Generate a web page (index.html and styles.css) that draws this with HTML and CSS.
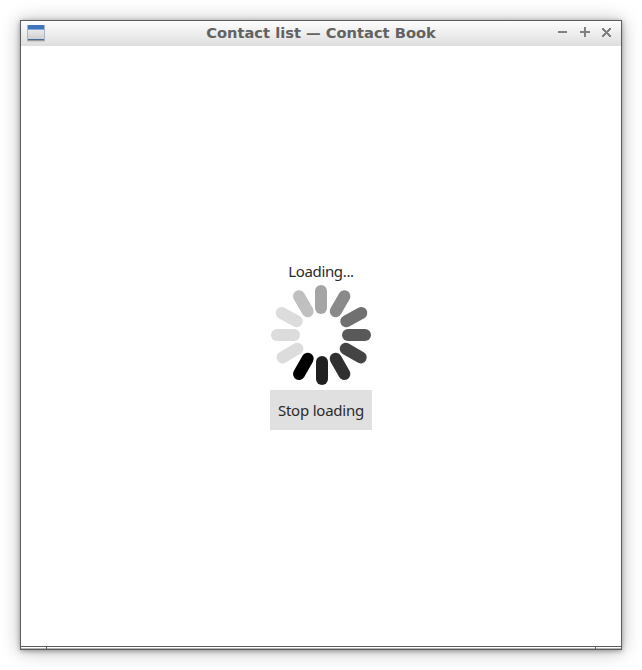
FILE: index.html
```html
<!DOCTYPE html>
<html lang="en">
<head>
<meta charset="utf-8">
<title>Contact list — Contact Book</title>
<link rel="stylesheet" href="styles.css">
</head>
<body>
<main class="window">
  <header class="titlebar">
    <svg class="app-icon" width="18" height="17" viewBox="0 0 18 17" shape-rendering="crispEdges">
      <defs><linearGradient id="pane" x1="0" y1="0" x2="0" y2="1"><stop offset="0" stop-color="#ececec"/><stop offset="1" stop-color="#cfcfcf"/></linearGradient></defs>
      <rect width="18" height="16" fill="#a9b5c5"/>
      <rect x="1" y="4" width="16" height="10" fill="url(#pane)"/>
      <rect x="1" width="16" height="4" fill="#3f74bd"/>
      <rect x="1" y="4" width="16" height="1" fill="#8aabd9"/>
      <rect x="1" y="14" width="16" height="1" fill="#496b9c"/>
      <rect x="1" y="15" width="16" height="1" fill="#9b9d9c"/>
      <rect y="16" width="18" height="1" fill="#cfcfcf"/>
    </svg>
    <h1 class="title">Contact list — Contact Book</h1>
    <svg class="controls" width="54" height="11" viewBox="0 0 54 11" shape-rendering="crispEdges" fill="#808080">
      <path d="M0 4h9v2H0z"/>
      <path d="M22 4h4V0h2v4h4v2h-4v4h-2V6h-4z"/>
      <path d="M44 1h2v1h-2zM51 1h2v1h-2zM44 2h3v1h-3zM50 2h3v1h-3zM45 3h3v1h-3zM49 3h3v1h-3zM46 4h5v1h-5zM47 5h3v1h-3zM46 6h5v1h-5zM45 7h3v1h-3zM49 7h3v1h-3zM44 8h3v1h-3zM50 8h3v1h-3zM44 9h2v1h-2zM51 9h2v1h-2z"/>
    </svg>
  </header>
  <section class="content">
    <p class="status">Loading...</p>
    <svg class="spinner" width="100" height="100" viewBox="0 0 100 100" fill="none" stroke-width="12" stroke-linecap="round">
      <path stroke="#a5a5a5" d="M50 6V23"/>
      <path stroke="#8a8a8a" d="M73.4 11.3 64.7 26.3"/>
      <path stroke="#707070" d="M90.3 28 75.3 36.3"/>
      <path stroke="#595959" d="M77 50H94"/>
      <path stroke="#444" d="M74.7 63.7 89.7 72.4"/>
      <path stroke="#303030" d="M64.7 73.7 73.4 89"/>
      <path stroke="#202020" d="M51 77V94"/>
      <path stroke="#000" d="M36.7 73.7 28 89"/>
      <path stroke="#dcdcdc" d="M26.4 63.7 11.6 72.4"/>
      <path stroke="#dcdcdc" d="M6 50H23"/>
      <path stroke="#dcdcdc" d="M10.7 28 25.7 36.3"/>
      <path stroke="#c0c0c0" d="M28 11.3 36.7 26.3"/>
    </svg>
    <button class="stop" type="button"><span class="stop-label">Stop loading</span></button>
  </section>
  <footer class="resize-bar"></footer>
</main>
</body>
</html>
```
FILE: styles.css
```css
* { box-sizing: border-box; }
body { margin: 0; padding: 20px; background: #fff; overflow: hidden; }
.window {
  width: 602px;
  height: 630px;
  border: 1px solid #5c5c5c;
  background: #fff;
  box-shadow: 0 1px 5px rgba(0, 0, 0, .35), 0 1px 18px rgba(0, 0, 0, .28);
}
.titlebar {
  height: 25px;
  display: grid;
  grid-template-columns: 64px 1fr 64px;
  align-items: start;
  background: linear-gradient(#fdfdfd, #dedede);
}
.app-icon { margin: 4px 0 0 6px; }
.title {
  margin: 0;
  font: bold 14.67px/24px "DejaVu Sans", sans-serif;
  color: #626262;
  text-align: center;
  white-space: nowrap;
}
.controls { margin: 6px 0 0 1px; }
.content {
  height: 600px;
  display: flex;
  flex-direction: column;
  align-items: center;
  padding-top: 213px;
  font: 15px/24px "Noto Sans", sans-serif;
  color: #2a2a2a;
}
.status {
  margin: 0;
  height: 26px;
  letter-spacing: -.35px;
}
.spinner { display: block; }
.stop {
  width: 102px;
  height: 40px;
  margin-top: 5px;
  padding: 0;
  border: 0;
  background: #e0e0e0;
  font: inherit;
  color: inherit;
  letter-spacing: -.22px;
  white-space: nowrap;
}
.resize-bar {
  height: 3px;
  border-top: 1px solid #5c5c5c;
  background:
    linear-gradient(#5c5c5c, #5c5c5c) 25px 0 / 1px 2px no-repeat,
    linear-gradient(#5c5c5c, #5c5c5c) 574px 0 / 1px 2px no-repeat,
    linear-gradient(#fff 50%, #b5b5b5 50%);
}
```
